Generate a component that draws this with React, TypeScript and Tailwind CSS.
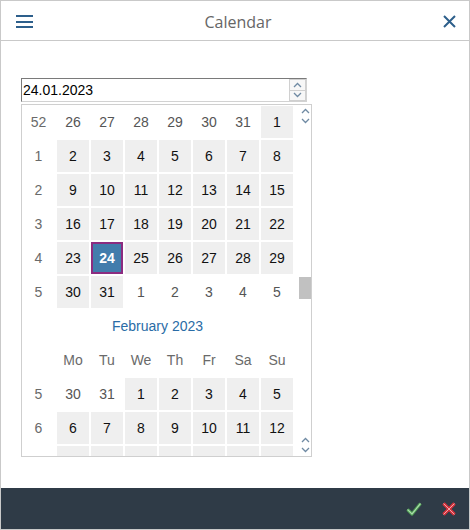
type Day = { n: number; cur: boolean; sel?: boolean };

const jan: { wk: number; days: Day[] }[] = [
  { wk: 52, days: [26, 27, 28, 29, 30, 31].map((n) => ({ n, cur: false })).concat([{ n: 1, cur: true }]) },
  { wk: 1, days: [2, 3, 4, 5, 6, 7, 8].map((n) => ({ n, cur: true })) },
  { wk: 2, days: [9, 10, 11, 12, 13, 14, 15].map((n) => ({ n, cur: true })) },
  { wk: 3, days: [16, 17, 18, 19, 20, 21, 22].map((n) => ({ n, cur: true })) },
  { wk: 4, days: [23, 24, 25, 26, 27, 28, 29].map((n) => ({ n, cur: true, sel: n === 24 })) },
  { wk: 5, days: [{ n: 30, cur: true }, { n: 31, cur: true }].concat([1, 2, 3, 4, 5].map((n) => ({ n, cur: false }))) },
];

const feb: { wk: number; days: Day[] }[] = [
  { wk: 5, days: [{ n: 30, cur: false }, { n: 31, cur: false }].concat([1, 2, 3, 4, 5].map((n) => ({ n, cur: true }))) },
  { wk: 6, days: [6, 7, 8, 9, 10, 11, 12].map((n) => ({ n, cur: true })) },
];

const weekdays = ["Mo", "Tu", "We", "Th", "Fr", "Sa", "Su"];

function Chevron({ up }: { up?: boolean }) {
  return (
    <svg width="9" height="6" viewBox="0 0 9 6">
      <path d={up ? "M1 5 L4.5 1.5 L8 5" : "M1 1 L4.5 4.5 L8 1"} fill="none" stroke="#6f8aa3" strokeWidth="1.3" />
    </svg>
  );
}

function Cell({ d }: { d: Day }) {
  if (d.sel) {
    return (
      <div className="h-8 flex items-center justify-center bg-[#427cac] border-2 border-[#8c2c80] text-white font-bold">
        {d.n}
      </div>
    );
  }
  return (
    <div className={`h-8 flex items-center justify-center ${d.cur ? "bg-[#efefef] text-[#111]" : "text-[#555]"}`}>
      {d.n}
    </div>
  );
}

function Week({ wk, days }: { wk: number; days: Day[] }) {
  return (
    <>
      <div className="h-8 flex items-center justify-center text-[#6a6a6a]">{wk}</div>
      {days.map((d, i) => (
        <Cell key={i} d={d} />
      ))}
    </>
  );
}

export default function App() {
  return (
    <div className="w-[470px] h-[530px] flex flex-col bg-white border border-[#c9c9c9] overflow-hidden">
      {/* Header */}
      <div className="h-[40px] shrink-0 flex items-center justify-between px-[15px] border-b border-[#c9c9c9]">
        <svg width="17" height="14" viewBox="0 0 17 14">
          <rect x="0" y="1" width="17" height="2" fill="#2d5f8b" />
          <rect x="0" y="7" width="17" height="2" fill="#2d5f8b" />
          <rect x="0" y="12" width="17" height="2" fill="#2d5f8b" />
        </svg>
        <span className="text-[16px] text-[#666] font-['Open_Sans',sans-serif] pt-[2px]">Calendar</span>
        <svg width="13" height="13" viewBox="0 0 13 13" className="mr-[-2px] mt-[2px]">
          <path d="M1 1 L12 12 M12 1 L1 12" stroke="#2d5f8b" strokeWidth="2" />
        </svg>
      </div>

      {/* Content */}
      <div className="flex-1 pl-[20px] pt-[37px] font-['Liberation_Sans',Arial,sans-serif] text-[14px]">
        <div className="w-[286px] h-[24px] flex items-center border border-[#d2d2d2] border-t-[#7a7a7a] border-l-[#7a7a7a] bg-white">
          <span className="flex-1 pl-[1px] text-black">24.01.2023</span>
          <div className="w-[17px] h-[22px] flex flex-col">
            <div className="flex-1 flex items-center justify-center border border-[#d0d0d0] bg-[#f7f7f7]">
              <Chevron up />
            </div>
            <div className="flex-1 flex items-center justify-center border border-t-0 border-[#d0d0d0] bg-[#f7f7f7]">
              <Chevron />
            </div>
          </div>
        </div>

        <div className="mt-[2px] w-[291px] h-[353px] border border-[#cfcfcf] flex overflow-hidden">
          <div className="w-[277px] pt-[1px] overflow-hidden">
            <div className="grid grid-cols-[33px_repeat(7,32px)] gap-[2px]">
              {jan.map((w, i) => (
                <Week key={"j" + i} wk={w.wk} days={w.days} />
              ))}
              <div className="col-span-8 h-8 flex items-center justify-center text-[#2a6ca6]">February 2023</div>
              <div className="h-8" />
              {weekdays.map((w) => (
                <div key={w} className="h-8 flex items-center justify-center text-[#6a6a6a]">
                  {w}
                </div>
              ))}
              {feb.map((w, i) => (
                <Week key={"f" + i} wk={w.wk} days={w.days} />
              ))}
              {/* next week row, scrolled out of view */}
              <div className="h-8" />
              {weekdays.map((w) => (
                <div key={"p" + w} className="h-8 bg-[#efefef]" />
              ))}
            </div>
          </div>
          <div className="flex-1 flex flex-col items-end pl-[5px]">
            <div className="w-[12px] h-full flex flex-col relative">
              <div className="flex flex-col items-center pt-[3px] gap-[4px]">
                <Chevron up />
                <Chevron />
              </div>
              <div className="absolute left-0 top-[172px] w-[12px] h-[22px] bg-[#c1c1c1]" />
              <div className="mt-auto flex flex-col items-center pb-[3px] gap-[4px]">
                <Chevron up />
                <Chevron />
              </div>
            </div>
          </div>
        </div>
      </div>

      {/* Footer */}
      <div className="h-[41px] shrink-0 bg-[#2f3b47] flex items-center justify-end gap-[20px] pr-[13px]">
        <svg width="16" height="14" viewBox="0 0 16 14">
          <path d="M1.5 7.5 L6 12 L14.5 1.5" fill="none" stroke="#4a9650" strokeWidth="3.2" strokeLinejoin="round" />
          <path d="M1.5 7.5 L6 12 L14.5 1.5" fill="none" stroke="#a8dba8" strokeWidth="1.2" strokeLinejoin="round" />
        </svg>
        <svg width="14" height="14" viewBox="0 0 14 14">
          <path d="M1.5 1.5 L12.5 12.5 M12.5 1.5 L1.5 12.5" stroke="#d5323c" strokeWidth="3.4" />
          <path d="M1.5 1.5 L12.5 12.5 M12.5 1.5 L1.5 12.5" stroke="#f4a3a8" strokeWidth="1" />
        </svg>
      </div>
    </div>
  );
}
